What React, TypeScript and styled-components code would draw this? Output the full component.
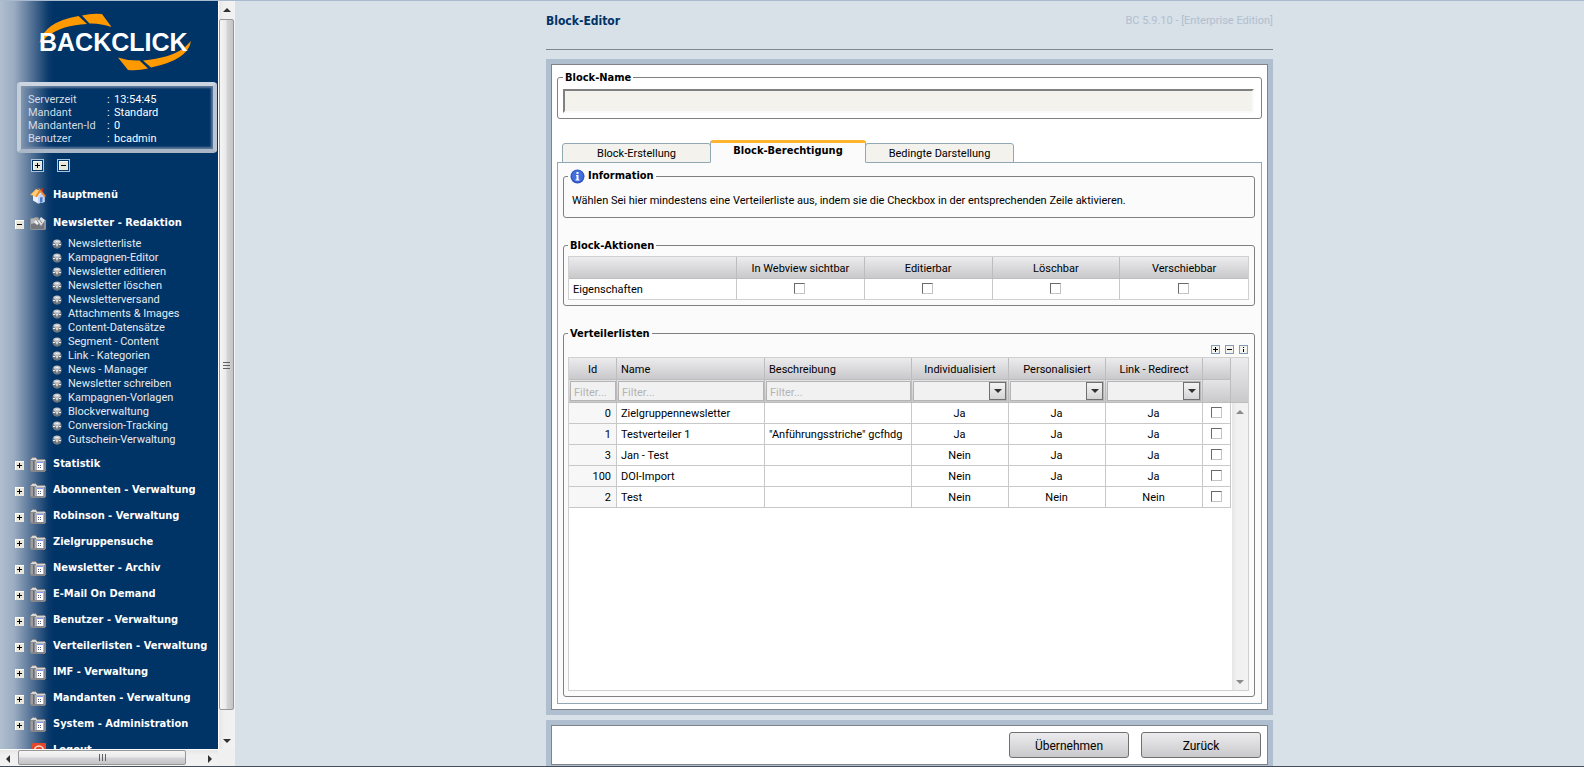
import React, { useState } from "react";
import styled, { createGlobalStyle, css } from "styled-components";

const regular = `Roboto, "Liberation Sans", sans-serif`;
const strong = `"DejaVu Sans Condensed", "DejaVu Sans", sans-serif`;
const line = "#c8c8c8";
const cellGradient = "linear-gradient(#ececee, #c9c8ca)";

const GlobalStyle = createGlobalStyle`
  *, *::before, *::after { box-sizing: border-box; }
  body { margin: 0; font: 11px/14px ${regular}; color: #000; background: #d8e0e8; }
  button, input, select { font: inherit; color: inherit; margin: 0; }
  ul { list-style: none; margin: 0; padding: 0; }
  a { color: inherit; text-decoration: none; }
`;

const Page = styled.div`
  display: flex;
  height: 100vh;
  min-height: 560px;
  border-top: 1px solid #a9bccf;
  border-bottom: 1px solid #454c5a;
  overflow: hidden;
`;

/* ---------- Sidebar ---------- */

const SideFrame = styled.div`
  flex: none;
  display: grid;
  grid-template-columns: 218px 17px;
  grid-template-rows: minmax(0, 1fr) 17px;
  background: #f0f0f0;
`;

const Sidebar = styled.div`
  overflow: hidden;
  color: #e6ebf1;
  background: linear-gradient(90deg, #b0bfd0 0, #9bacc1 14px, #4a6a90 34px, #0b3b6c 48px, #003366 54px);
`;

const Logo = styled.a`
  display: block;
  height: 81px;
  margin-left: 37px;
`;

const ServerInfo = styled.dl`
  display: grid;
  grid-template-columns: 79px 1fr;
  align-content: start;
  height: 71px;
  margin: 0 1px 0 17px;
  padding: 7px 7px 0;
  font-size: 11px;
  line-height: 13px;
  border: 4px solid;
  border-color: #cdd6e0 #b9c5d2 #a9b7c6 #c3cedb;
  border-radius: 4px;
  box-shadow: inset 0 0 2px 2px rgba(130, 150, 175, 0.7);
`;

const InfoLabel = styled.dt`
  color: #d3dbe4;
`;

const InfoValue = styled.dd`
  margin: 0;
  color: #fff;
  &::before {
    content: ":";
    display: inline-block;
    width: 7px;
  }
`;

const ExpandBar = styled.div`
  display: flex;
  gap: 13px;
  padding: 6px 0 0 31px;
`;

const ExpandButton = styled.button`
  display: flex;
  width: 13px;
  height: 13px;
  padding: 1px;
  border: 1px solid #a8c4dc;
  background: #003366;
`;

const Menu = styled.ul`
  padding-top: 9px;
`;

const MenuItem = styled.li<{ $tall?: boolean }>`
  display: flex;
  align-items: center;
  height: ${(p) => (p.$tall ? 28 : 26)}px;
  padding-left: 15px;
  font: bold 11px/14px ${strong};
  color: #fff;
`;

const ToggleButton = styled.button<{ $hidden?: boolean }>`
  display: flex;
  width: 9px;
  height: 9px;
  margin: 2px 6px 0 0;
  padding: 0;
  border: 0;
  background: none;
  visibility: ${(p) => (p.$hidden ? "hidden" : "visible")};
`;

const MenuLink = styled.a`
  display: flex;
  align-items: center;
  gap: 7px;
  white-space: nowrap;
`;

const SubMenu = styled.ul`
  padding-bottom: 4px;
`;

const SubItem = styled.li`
  height: 14px;
  padding-left: 52px;
`;

const SubLink = styled.a`
  display: flex;
  align-items: center;
  gap: 6px;
  color: #e6ebf1;
`;

/* ---------- Scroll bars ---------- */

const Track = styled.div<{ $dir: "v" | "h"; $pale?: boolean }>`
  display: flex;
  flex: ${(p) => (p.$pale ? 1 : "none")};
  flex-direction: ${(p) => (p.$dir === "v" ? "column" : "row")};
  justify-content: space-between;
  background: ${(p) =>
    p.$dir === "v"
      ? "linear-gradient(90deg, #e6e6e6, #f0f0f0 30%, #f2f2f2)"
      : "linear-gradient(#e6e6e6, #f0f0f0 30%, #f2f2f2)"};
  ${(p) => (p.$dir === "v" ? "border-left: 1px solid #fff;" : "width: 218px; border-top: 1px solid #fff;")}
`;

const Arrow = styled.button`
  display: flex;
  align-items: center;
  justify-content: center;
  flex: none;
  width: 16px;
  height: 17px;
  padding: 0;
  border: 0;
  background: none;
`;

const Thumb = styled.div<{ $dir: "v" | "h" }>`
  display: flex;
  align-items: center;
  justify-content: center;
  flex: 1;
  border: 1px solid #979797;
  border-radius: 2px;
  background: ${(p) =>
    p.$dir === "v"
      ? "linear-gradient(90deg, #f5f5f5, #e9e9eb 48%, #d5d5d8 52%, #c4c4c8)"
      : "linear-gradient(#f5f5f5, #e9e9eb 48%, #d5d5d8 52%, #c4c4c8)"};
  ${(p) => (p.$dir === "v" ? "margin: 1px 1px 22px 0;" : "margin: 0 16px 1px 2px;")}
`;

/* ---------- Main column ---------- */

const Main = styled.main`
  flex: 1;
  display: flex;
  justify-content: center;
  min-width: 0;
`;

const Column = styled.div`
  display: flex;
  flex-direction: column;
  width: 100%;
  max-width: 727px;
`;

const Header = styled.header`
  display: flex;
  justify-content: space-between;
  height: 49px;
  padding-top: 13px;
  border-bottom: 1px solid #7f868d;
  margin-bottom: 9px;
`;

const Title = styled.h1`
  margin: 0;
  font: bold 12px/14px ${strong};
  color: #003366;
`;

const Version = styled.span`
  color: #b0bfd0;
`;

const EditorPanel = styled.section`
  flex: 1;
  display: flex;
  flex-direction: column;
  min-height: 0;
  border: 5px solid #b0bfd0;
  margin-bottom: 5px;
`;

const PanelBody = styled.div`
  flex: 1;
  display: flex;
  flex-direction: column;
  min-height: 0;
  padding: 5px;
  border: 1px solid #808388;
  background: #fff;
`;

const Group = styled.fieldset<{ $pad: string; $grow?: boolean }>`
  display: flex;
  flex-direction: column;
  min-width: 0;
  min-height: 0;
  margin: 0;
  padding: ${(p) => p.$pad};
  border: 1px solid #808080;
  border-radius: 3px;
  ${(p) => p.$grow && css`flex: 1;`}
`;

const Legend = styled.legend<{ $inset?: number }>`
  margin-left: ${(p) => p.$inset ?? 0}px;
  height: 14px;
  padding: 0 2px;
  font: bold 11px/16px ${strong};
`;

const IconLegend = styled(Legend)`
  display: flex;
  gap: 3px;
  height: 16px;
`;

const NameInput = styled.input`
  width: 100%;
  height: 24px;
  padding: 2px 4px;
  border: 2px solid;
  border-color: #808080 #fafafa #fafafa #808080;
  background: #f3f2ed;
`;

const TabBar = styled.div`
  display: flex;
  align-items: flex-end;
  margin: 21px 0 -1px 5px;
`;

const Tab = styled.button<{ $active?: boolean }>`
  width: 149px;
  height: 20px;
  padding: 1px 0 0;
  border: 1px solid #91a7b4;
  border-radius: 3px 3px 0 0;
  background: #f3f2ed;
  font: 11px/14px ${regular};
  ${(p) =>
    p.$active &&
    css`
      position: relative;
      width: 156px;
      height: 23px;
      margin: 0 -1px;
      padding: 0 0 4px;
      border-top: 3px solid #ffb52e;
      border-bottom-color: #fbfbfb;
      background: #fbfbfb;
      font: bold 11px/14px ${strong};
    `}
`;

const TabPanel = styled.div`
  flex: 1;
  display: flex;
  flex-direction: column;
  gap: 20px;
  min-height: 0;
  padding: 5px 6px 6px 5px;
  border: 1px solid #91a7b4;
  background: #fbfbfb;
`;

const Hint = styled.p`
  margin: 0;
`;

/* ---------- Tables ---------- */

const Table = styled.table`
  width: 100%;
  table-layout: fixed;
  border-collapse: separate;
  border-spacing: 0;
  background: #fff;
`;

const ActionTable = styled(Table)`
  border: 1px solid #d0d0d0;
`;

const Row = styled.tr<{ $h: number }>`
  height: ${(p) => p.$h}px;
`;

type Align = "left" | "center" | "right";

const HeadCell = styled.th<{ $align?: Align; $last?: boolean }>`
  padding: 2px 4px 0;
  font-weight: normal;
  text-align: ${(p) => p.$align ?? "center"};
  border: 0 solid #bdbdbd;
  border-width: 0 ${(p) => (p.$last ? 0 : 1)}px 1px 0;
  background: ${cellGradient};
`;

const FilterCell = styled.td`
  padding: 1px 0 1px 1px;
  border: 0 solid #bdbdbd;
  border-width: 0 1px 1px 0;
  background: linear-gradient(#e4e4e6, #c9c8ca);
`;

const Cell = styled.td<{ $align?: Align; $tint?: boolean; $last?: boolean }>`
  padding: 2px 5px 0 4px;
  overflow: hidden;
  white-space: nowrap;
  text-align: ${(p) => p.$align ?? "left"};
  border: 0 solid ${line};
  border-width: 0 ${(p) => (p.$last ? 0 : 1)}px 1px 0;
  background: ${(p) => (p.$tint ? "#f7f7f7" : "#fff")};
`;

const ActionCell = styled(Cell)`
  border-bottom-width: 0;
`;

const Check = styled.input`
  appearance: none;
  display: block;
  width: 11px;
  height: 11px;
  margin: 0 auto 4px;
  border: 1px solid;
  border-color: #6a6a6a #c4c4c4 #c4c4c4 #6a6a6a;
  background: #fff;
  &:checked { background: #003366; }
`;

const FilterInput = styled.input`
  display: block;
  width: 100%;
  height: 20px;
  padding: 2px 3px 0;
  border: 1px solid #b4b4b4;
  background: #f1f1f1;
  &::placeholder { color: #b4b4b4; opacity: 1; }
`;

const SelectWrap = styled.div`
  position: relative;
  margin-right: 1px;
`;

const FilterSelect = styled.select`
  appearance: none;
  display: block;
  width: 100%;
  height: 20px;
  padding: 0 20px 0 4px;
  border: 1px solid #b4b4b4;
  border-radius: 0;
  background: #f1f1f1;
`;

const SelectArrow = styled.span`
  position: absolute;
  top: 1px;
  right: 1px;
  display: flex;
  align-items: center;
  justify-content: center;
  width: 17px;
  height: 18px;
  border: 1px solid #707070;
  background: linear-gradient(#f4f4f4, #d4d4d6);
  pointer-events: none;
`;

const GridTools = styled.div`
  display: flex;
  justify-content: flex-end;
  gap: 5px;
  padding: 0 1px 3px 0;
`;

const ToolButton = styled.button`
  display: flex;
  width: 9px;
  height: 10px;
  padding: 1px 0 0;
  border: 0;
  background: none;
`;

const Grid = styled.div`
  flex: 1;
  display: flex;
  min-height: 0;
  border: 1px solid #d0d0d0;
  background: #fff;
`;

const GridBody = styled.div`
  flex: 1;
  min-width: 0;
  overflow: hidden;
`;

const GridSide = styled.div`
  flex: none;
  display: flex;
  flex-direction: column;
  width: 17px;
`;

const GridCap = styled.div`
  height: 45px;
  border-bottom: 1px solid #bdbdbd;
  background: ${cellGradient};
`;

/* ---------- Footer ---------- */

const Footer = styled.footer`
  border: 5px solid #b0bfd0;
  border-bottom-width: 1px;
`;

const FooterBody = styled.div`
  display: flex;
  justify-content: flex-end;
  gap: 12px;
  padding: 6px;
  border: 1px solid #808388;
  background: #fff;
`;

const ActionButton = styled.button`
  width: 120px;
  height: 26px;
  padding: 1px 0 0;
  font: 12px/14px ${regular};
  border: 1px solid #707070;
  border-radius: 3px;
  background: ${cellGradient};
`;

/* ---------- Drawings ---------- */

const LogoDrawing = () => (
  <svg width="156" height="80" viewBox="37 1 156 80" role="img" aria-label="BACKCLICK">
    <g fill="#f90">
      <path d="M39.500 43 Q44 22 78.500 16 L87 24 Q62 25 48 36Z" />
      <path d="M82 15.500 Q92 13 102 14 L111.500 27 Q100 23 89.500 23.500Z" />
      <path d="M118 57.500 Q128 61 139.500 60.500 L148 68.500 Q138 71 128 70Z" />
      <path d="M143 60.500 Q170 58 184 48 L191 41 Q188 60 151 67.500Z" />
    </g>
    <text x="39" y="51" fill="#fff" fontFamily="Liberation Sans, Arial, sans-serif" fontWeight="700" fontSize="25">
      BACKCLICK
    </text>
  </svg>
);

type Sign = "plus" | "minus" | "info";

const SignBox = ({ sign, framed }: { sign: Sign; framed?: boolean }) => (
  <svg width="9" height="9" viewBox="0 0 9 9" shapeRendering="crispEdges" aria-hidden="true">
    <rect width="9" height="9" fill={framed ? "#7f9db9" : "#fff"} />
    <rect x="1" y="1" width={framed ? 7 : 8} height={framed ? 7 : 8} fill={framed ? "#f4f3ee" : "#e9e6dc"} />
    {sign !== "info" && <rect x="2" y="4" width="5" height="1" fill="#000" />}
    {sign === "plus" && <rect x="4" y="2" width="1" height="5" fill="#000" />}
    {sign === "info" && <path d="M4 2h1v1h-1zM4 4h1v3h-1z" fill="#000" />}
  </svg>
);

const HouseIcon = () => (
  <svg width="16" height="17" viewBox="0 0 16 17" aria-hidden="true">
    <path d="M3 8 L9 4 L14.500 9 V15 L8 16.500 L3 13.500Z" fill="#e9eefb" />
    <path d="M8 16.500 V10 L11 6 L14.500 9 V15Z" fill="#c3d4f5" />
    <path d="M11 1h2v4l-2-1z" fill="#b8342a" />
    <path d="M0 8 L6 2 L11 4 L6 10 L3 8.500Z" fill="#ffb545" />
    <path d="M0 8 L6 1.500 L9 2 L5.500 10 L7 10 L10.500 5 L14 10 L16 9 L9.500 1.500 L6 1.500Z" fill="#ee8a2c" />
    <path d="M1.500 7.500 L6 2.500 L9 3.500 L5 9Z" fill="#ffce7a" />
    <path d="M10 10.500 L12.500 10 V15 L10 15.700Z" fill="#4a78c9" />
  </svg>
);

const NewsIcon = () => (
  <svg width="16" height="15" viewBox="0 0 16 15" aria-hidden="true">
    <path d="M0 3l1-1h3l1-1h3l2 3h6v9l-1 1H1l-1-1z" fill="#8e9196" />
    <path d="M1 3l6-1 1 4-7 2z" fill="#b4b7bb" />
    <path d="M1 8l13-1v6H1z" fill="#74777d" />
    <path d="M8 5l3-4 4 3-4 6z" fill="#dfe1e4" />
    <path d="M4 6l3-3 3 4-3 2z" fill="#f2f3f4" />
    <path d="M9 3l3 4M6 3l4 6" stroke="#85888d" strokeWidth="1" />
  </svg>
);

const FolderIcon = () => (
  <svg width="16" height="15" viewBox="0 0 16 15" shapeRendering="crispEdges" aria-hidden="true">
    <path d="M1 1h1V0h4v1h1v1h8v1h1v11h-1v1H1v-1H0V2h1z" fill="#85878c" />
    <path d="M2 1h4v1h1v1h8v1H6V3H1V2h1z" fill="#d7d8da" />
    <path d="M1 4h2v9H1z" fill="#9b9da2" />
    <path d="M3 4h1v9H3z" fill="#696b70" />
    <path d="M5 4h9v9H5z" fill="#b1b3b7" />
    <path d="M7 5h6v8H7z" fill="#fff" />
    <path d="M7 5h6v1H7z" fill="#7d97e8" />
    <path d="M8 8h1v1H8zM10 8h1v1h-1zM8 10h1v1H8zM10 10h1v1h-1z" fill="#555c80" />
  </svg>
);

const LogoutIcon = () => (
  <svg width="16" height="15" viewBox="0 0 16 15" aria-hidden="true">
    <rect x="2" width="14" height="15" rx="1" fill="#e2492b" />
    <circle cx="9" cy="7.500" r="4.500" fill="none" stroke="#fbd9d0" strokeWidth="1.500" />
    <circle cx="9" cy="7.500" r="1.500" fill="#fbd9d0" />
  </svg>
);

const BallIcon = () => (
  <svg width="10" height="10" viewBox="0 0 10 10" aria-hidden="true">
    <circle cx="5" cy="5" r="4.700" fill="#6f757d" />
    <ellipse cx="5" cy="2.700" rx="3.600" ry="1.900" fill="#c3c6ca" />
    <path d="M3.500 2.500h3M1 5.500h2M7 5.500h2" stroke="#eef0f1" />
    <path d="M3 4.500h4L5 8z" fill="#d5d8dc" />
  </svg>
);

const InfoIcon = () => (
  <svg width="15" height="16" viewBox="0 0 15 16" aria-hidden="true">
    <circle cx="7.500" cy="8.500" r="7" fill="#2f55c0" />
    <circle cx="7.500" cy="8" r="5.800" fill="#426fdc" />
    <path d="M6.500 4h2v2h-2zM6 7h2.500v4.500H9.500v1H5.500v-1h1V8H6z" fill="#fff" />
  </svg>
);

const Triangle = ({ d, pale }: { d: "up" | "down" | "left" | "right"; pale?: boolean }) => {
  const shapes = { up: "M0 6 4 2 8 6Z", down: "M0 2 4 6 8 2Z", left: "M6 0 2 4 6 8Z", right: "M2 0 6 4 2 8Z" };
  return (
    <svg width="8" height="8" viewBox="0 0 8 8" aria-hidden="true">
      <path d={shapes[d]} fill={pale ? "#8a8a8a" : "#303030"} />
    </svg>
  );
};

const Grip = ({ vertical }: { vertical?: boolean }) => (
  <svg width="8" height="8" viewBox="0 0 8 8" shapeRendering="crispEdges" aria-hidden="true">
    <path
      d={vertical ? "M0 1.500h7M0 4.500h7M0 7.500h7" : "M1.500 0v7M4.500 0v7M7.500 0v7"}
      stroke="#606060"
      fill="none"
    />
  </svg>
);

/* ---------- Data ---------- */

const serverInfo = [
  ["Serverzeit", "13:54:45"],
  ["Mandant", "Standard"],
  ["Mandanten-Id", "0"],
  ["Benutzer", "bcadmin"],
];

const newsletterItems = [
  "Newsletterliste",
  "Kampagnen-Editor",
  "Newsletter editieren",
  "Newsletter löschen",
  "Newsletterversand",
  "Attachments & Images",
  "Content-Datensätze",
  "Segment - Content",
  "Link - Kategorien",
  "News - Manager",
  "Newsletter schreiben",
  "Kampagnen-Vorlagen",
  "Blockverwaltung",
  "Conversion-Tracking",
  "Gutschein-Verwaltung",
];

const sections = [
  "Statistik",
  "Abonnenten - Verwaltung",
  "Robinson - Verwaltung",
  "Zielgruppensuche",
  "Newsletter - Archiv",
  "E-Mail On Demand",
  "Benutzer - Verwaltung",
  "Verteilerlisten - Verwaltung",
  "IMF - Verwaltung",
  "Mandanten - Verwaltung",
  "System - Administration",
];

const tabs = ["Block-Erstellung", "Block-Berechtigung", "Bedingte Darstellung"];
const actions = ["In Webview sichtbar", "Editierbar", "Löschbar", "Verschiebbar"];
const flags = ["Individualisiert", "Personalisiert", "Link - Redirect"];

const lists = [
  { id: 0, name: "Zielgruppennewsletter", text: "", flags: ["Ja", "Ja", "Ja"] },
  { id: 1, name: "Testverteiler 1", text: '"Anführungsstriche" gcfhdg', flags: ["Ja", "Ja", "Ja"] },
  { id: 3, name: "Jan - Test", text: "", flags: ["Nein", "Ja", "Ja"] },
  { id: 100, name: "DOI-Import", text: "", flags: ["Nein", "Ja", "Ja"] },
  { id: 2, name: "Test", text: "", flags: ["Nein", "Nein", "Nein"] },
];

/* ---------- Sections of the page ---------- */

const SideNavigation = () => (
  <SideFrame>
    <Sidebar>
      <Logo href="#start">
        <LogoDrawing />
      </Logo>
      <ServerInfo>
        {serverInfo.map(([label, value]) => (
          <React.Fragment key={label}>
            <InfoLabel>{label}</InfoLabel>
            <InfoValue>{value}</InfoValue>
          </React.Fragment>
        ))}
      </ServerInfo>
      <ExpandBar>
        <ExpandButton aria-label="Alle öffnen">
          <SignBox sign="plus" />
        </ExpandButton>
        <ExpandButton aria-label="Alle schließen">
          <SignBox sign="minus" />
        </ExpandButton>
      </ExpandBar>
      <nav>
        <Menu>
          <MenuItem $tall>
            <ToggleButton $hidden tabIndex={-1} aria-hidden="true" />
            <MenuLink href="#hauptmenue">
              <HouseIcon />
              Hauptmenü
            </MenuLink>
          </MenuItem>
          <MenuItem $tall>
            <ToggleButton aria-label="Newsletter - Redaktion schließen">
              <SignBox sign="minus" />
            </ToggleButton>
            <MenuLink href="#redaktion">
              <NewsIcon />
              Newsletter - Redaktion
            </MenuLink>
          </MenuItem>
          <li>
            <SubMenu>
              {newsletterItems.map((item) => (
                <SubItem key={item}>
                  <SubLink href="#redaktion">
                    <BallIcon />
                    {item}
                  </SubLink>
                </SubItem>
              ))}
            </SubMenu>
          </li>
          {sections.map((item) => (
            <MenuItem key={item}>
              <ToggleButton aria-label={`${item} öffnen`}>
                <SignBox sign="plus" />
              </ToggleButton>
              <MenuLink href="#verwaltung">
                <FolderIcon />
                {item}
              </MenuLink>
            </MenuItem>
          ))}
          <MenuItem>
            <ToggleButton $hidden tabIndex={-1} aria-hidden="true" />
            <MenuLink href="#logout">
              <LogoutIcon />
              Logout
            </MenuLink>
          </MenuItem>
        </Menu>
      </nav>
    </Sidebar>
    <Track $dir="v">
      <Arrow aria-label="Nach oben"><Triangle d="up" /></Arrow>
      <Thumb $dir="v"><Grip vertical /></Thumb>
      <Arrow aria-label="Nach unten"><Triangle d="down" /></Arrow>
    </Track>
    <Track $dir="h">
      <Arrow aria-label="Nach links"><Triangle d="left" /></Arrow>
      <Thumb $dir="h"><Grip /></Thumb>
      <Arrow aria-label="Nach rechts"><Triangle d="right" /></Arrow>
    </Track>
  </SideFrame>
);

const BlockActions = () => (
  <Group $pad="4px 5px 5px 4px">
    <Legend>Block-Aktionen</Legend>
    <ActionTable>
      <colgroup>
        <col width="168" />
        <col span={4} />
      </colgroup>
      <thead>
        <Row $h={22}>
          <HeadCell />
          {actions.map((a, i) => (
            <HeadCell key={a} $last={i === 3}>{a}</HeadCell>
          ))}
        </Row>
      </thead>
      <tbody>
        <Row $h={20}>
          <ActionCell>Eigenschaften</ActionCell>
          {actions.map((a, i) => (
            <ActionCell key={a} $align="center" $last={i === 3}>
              <Check type="checkbox" aria-label={a} />
            </ActionCell>
          ))}
        </Row>
      </tbody>
    </ActionTable>
  </Group>
);

const MailingLists = () => (
  <Group $pad="4px 5px 5px 4px" $grow>
    <Legend>Verteilerlisten</Legend>
    <GridTools>
      <ToolButton aria-label="Alle auswählen"><SignBox sign="plus" framed /></ToolButton>
      <ToolButton aria-label="Auswahl aufheben"><SignBox sign="minus" framed /></ToolButton>
      <ToolButton aria-label="Information"><SignBox sign="info" framed /></ToolButton>
    </GridTools>
    <Grid>
      <GridBody>
        <Table>
          <colgroup>
            <col width="48" />
            <col width="148" />
            <col />
            <col width="97" span={3} />
            <col width="28" />
          </colgroup>
          <thead>
            <Row $h={22}>
              <HeadCell>Id</HeadCell>
              <HeadCell $align="left">Name</HeadCell>
              <HeadCell $align="left">Beschreibung</HeadCell>
              {flags.map((f) => (
                <HeadCell key={f}>{f}</HeadCell>
              ))}
              <HeadCell />
            </Row>
            <Row $h={23}>
              {["Id", "Name", "Beschreibung"].map((f) => (
                <FilterCell key={f}>
                  <FilterInput placeholder="Filter..." aria-label={`Filter ${f}`} />
                </FilterCell>
              ))}
              {flags.map((f) => (
                <FilterCell key={f}>
                  <SelectWrap>
                    <FilterSelect aria-label={`Filter ${f}`} defaultValue="">
                      <option value=""></option>
                      <option>Ja</option>
                      <option>Nein</option>
                    </FilterSelect>
                    <SelectArrow><Triangle d="down" /></SelectArrow>
                  </SelectWrap>
                </FilterCell>
              ))}
              <FilterCell />
            </Row>
          </thead>
          <tbody>
            {lists.map((l) => (
              <Row $h={21} key={l.id}>
                <Cell $align="right" $tint>{l.id}</Cell>
                <Cell>{l.name}</Cell>
                <Cell>{l.text}</Cell>
                {l.flags.map((f, i) => (
                  <Cell key={i} $align="center">{f}</Cell>
                ))}
                <Cell $align="center">
                  <Check type="checkbox" aria-label={l.name} />
                </Cell>
              </Row>
            ))}
          </tbody>
        </Table>
      </GridBody>
      <GridSide>
        <GridCap />
        <Track $dir="v" $pale>
          <Arrow aria-label="Liste nach oben"><Triangle d="up" pale /></Arrow>
          <Arrow aria-label="Liste nach unten"><Triangle d="down" pale /></Arrow>
        </Track>
      </GridSide>
    </Grid>
  </Group>
);

export default function App() {
  const [name, setName] = useState("");
  return (
    <>
      <GlobalStyle />
      <Page>
        <SideNavigation />
        <Main>
          <Column>
            <Header>
              <Title>Block-Editor</Title>
              <Version>BC 5.9.10 - [Enterprise Edition]</Version>
            </Header>
            <EditorPanel>
              <PanelBody>
                <Group $pad="5px 7px 5px 5px">
                  <Legend>Block-Name</Legend>
                  <NameInput aria-label="Block-Name" value={name} onChange={(e) => setName(e.target.value)} />
                </Group>
                <TabBar role="tablist">
                  {tabs.map((t, i) => (
                    <Tab key={t} role="tab" aria-selected={i === 1} $active={i === 1}>{t}</Tab>
                  ))}
                </TabBar>
                <TabPanel role="tabpanel">
                  <Group $pad="10px 8px 9px">
                    <IconLegend $inset={-4}>
                      <InfoIcon />
                      Information
                    </IconLegend>
                    <Hint>
                      Wählen Sei hier mindestens eine Verteilerliste aus, indem sie die Checkbox in der
                      entsprechenden Zeile aktivieren.
                    </Hint>
                  </Group>
                  <BlockActions />
                  <MailingLists />
                </TabPanel>
              </PanelBody>
            </EditorPanel>
            <Footer>
              <FooterBody>
                <ActionButton>Übernehmen</ActionButton>
                <ActionButton>Zurück</ActionButton>
              </FooterBody>
            </Footer>
          </Column>
        </Main>
      </Page>
    </>
  );
}
